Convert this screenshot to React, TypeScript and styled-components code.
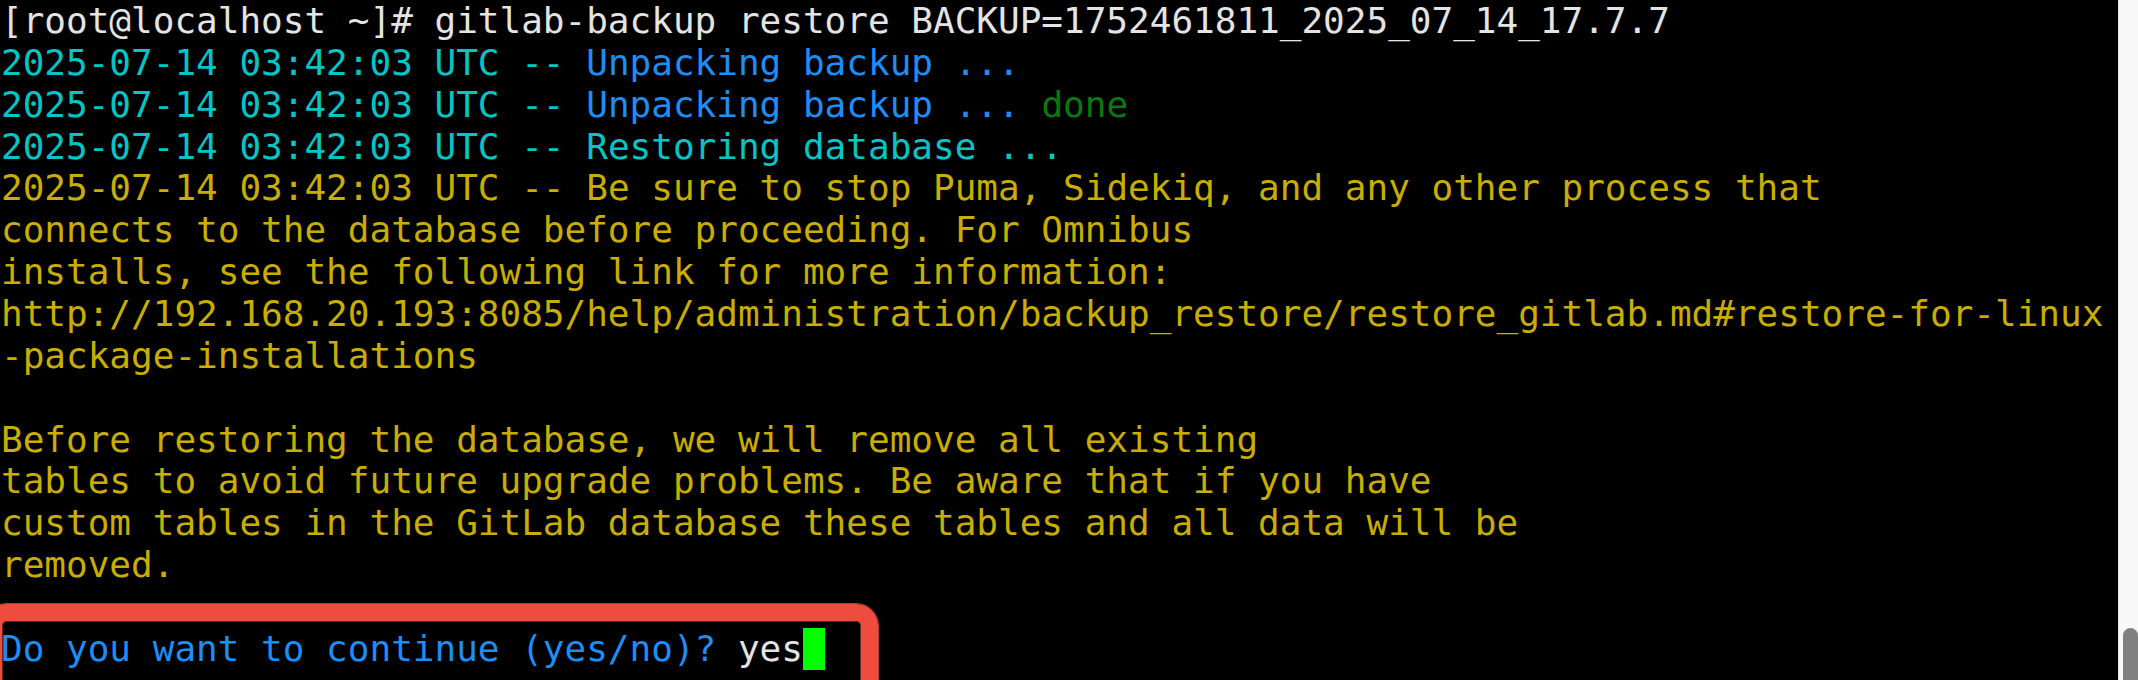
import React from "react";
import styled, { createGlobalStyle } from "styled-components";

const GlobalStyle = createGlobalStyle`
  html, body {
    margin: 0;
    padding: 0;
    background: #000;
    overflow: hidden;
  }
`;

const Screen = styled.div`
  display: flex;
  flex-direction: row;
  width: 2138px;
  height: 680px;
  overflow: hidden;
`;

const Terminal = styled.div`
  position: relative;
  flex: 1;
  background: #000;
  overflow: hidden;
`;

const Output = styled.div`
  margin: 0;
  padding: 0 0 0 1px;
  font-family: "DejaVu Sans Mono", "Liberation Mono", monospace;
  font-size: 36px;
  line-height: 41.86px;
  white-space: pre;
  color: #e4e4e4;
`;

const Line = styled.div`
  height: 41.86px;
`;

type Tone = "white" | "cyan" | "blue" | "green" | "yellow";

const tones: Record<Tone, string> = {
  white: "#e4e4e4",
  cyan: "#00c6c8",
  blue: "#1c8ef8",
  green: "#077a0c",
  yellow: "#c9ad00",
};

const Span = styled.span<{ $tone: Tone }>`
  color: ${p => tones[p.$tone]};
`;

const Cursor = styled.span`
  display: inline-block;
  width: 22px;
  height: 42px;
  vertical-align: top;
  background: #00ff00;
`;

const Highlight = styled.div`
  position: absolute;
  left: -15px;
  top: 604px;
  width: 893px;
  height: 110px;
  box-sizing: border-box;
  border: 17px solid #ef4c40;
  border-radius: 22px;
  box-shadow: inset 0 0 0 1px #6a231c, 0 0 0 1px #b8392f;
  pointer-events: none;
`;

const ScrollTrack = styled.div`
  width: 19px;
  display: flex;
  flex-direction: column;
  justify-content: flex-end;
  align-items: flex-end;
  background: #f9f9f9;
  border-left: 1px solid #e6e6e6;
`;

const ScrollThumb = styled.div`
  width: 15px;
  height: 52px;
  background: #808080;
  border-radius: 8px 8px 0 0;
`;

const TS = "2025-07-14 03:42:03 UTC -- ";

const App: React.FC = () => {
  return (
    <Screen>
      <GlobalStyle />
      <Terminal>
        <Output>
          <Line>
            <Span $tone="white">
              [root@localhost ~]# gitlab-backup restore BACKUP=1752461811_2025_07_14_17.7.7
            </Span>
          </Line>
          <Line>
            <Span $tone="cyan">{TS}</Span>
            <Span $tone="blue">Unpacking backup ...</Span>
          </Line>
          <Line>
            <Span $tone="cyan">{TS}</Span>
            <Span $tone="blue">Unpacking backup ...</Span> <Span $tone="green">done</Span>
          </Line>
          <Line>
            <Span $tone="cyan">{TS}Restoring database ...</Span>
          </Line>
          <Line>
            <Span $tone="yellow">
              {TS}Be sure to stop Puma, Sidekiq, and any other process that
            </Span>
          </Line>
          <Line>
            <Span $tone="yellow">connects to the database before proceeding. For Omnibus</Span>
          </Line>
          <Line>
            <Span $tone="yellow">installs, see the following link for more information:</Span>
          </Line>
          <Line>
            <Span $tone="yellow">
              http://192.168.20.193:8085/help/administration/backup_restore/restore_gitlab.md#restore-for-linux
            </Span>
          </Line>
          <Line>
            <Span $tone="yellow">-package-installations</Span>
          </Line>
          <Line />
          <Line>
            <Span $tone="yellow">Before restoring the database, we will remove all existing</Span>
          </Line>
          <Line>
            <Span $tone="yellow">
              tables to avoid future upgrade problems. Be aware that if you have
            </Span>
          </Line>
          <Line>
            <Span $tone="yellow">
              custom tables in the GitLab database these tables and all data will be
            </Span>
          </Line>
          <Line>
            <Span $tone="yellow">removed.</Span>
          </Line>
          <Line />
          <Line>
            <Span $tone="blue">Do you want to continue (yes/no)? </Span>
            <Span $tone="white">yes</Span>
            <Cursor />
          </Line>
        </Output>
        <Highlight />
      </Terminal>
      <ScrollTrack>
        <ScrollThumb />
      </ScrollTrack>
    </Screen>
  );
};

export default App;
